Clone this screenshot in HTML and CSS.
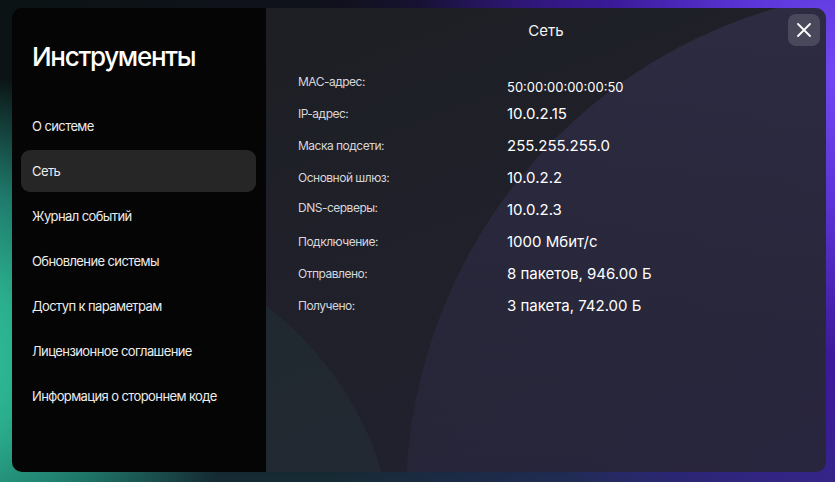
FILE: index.html
```html
<!DOCTYPE html>
<html lang="ru">
<head>
<meta charset="utf-8">
<title>Инструменты</title>
<link rel="stylesheet" href="styles.css">
</head>
<body>
<div class="screen">
  <div class="dialog">
    <aside class="sidebar">
      <h1 class="title">Инструменты</h1>
      <nav class="nav">
        <a class="nav-item">О системе</a>
        <a class="nav-item active">Сеть</a>
        <a class="nav-item">Журнал событий</a>
        <a class="nav-item">Обновление системы</a>
        <a class="nav-item">Доступ к параметрам</a>
        <a class="nav-item">Лицензионное соглашение</a>
        <a class="nav-item">Информация о стороннем коде</a>
      </nav>
    </aside>
    <main class="content">
      <div class="deco deco-circle"></div>
      <div class="deco deco-teal"></div>
      <header class="content-head">
        <span></span>
        <h2 class="content-title">Сеть</h2>
        <button class="close" aria-label="Закрыть">
          <svg width="14" height="14" viewBox="0 0 14 14"><path d="M1 1 L13 13 M13 1 L1 13" stroke="#fff" stroke-width="1.8" stroke-linecap="round" fill="none"/></svg>
        </button>
      </header>
      <dl class="info">
        <dt>MAC-адрес:</dt><dd class="mac">50:00:00:00:00:50</dd>
        <dt>IP-адрес:</dt><dd>10.0.2.15</dd>
        <dt>Маска подсети:</dt><dd>255.255.255.0</dd>
        <dt>Основной шлюз:</dt><dd>10.0.2.2</dd>
        <dt class="dns">DNS-серверы:</dt><dd>10.0.2.3</dd>
        <dt>Подключение:</dt><dd>1000 Мбит/с</dd>
        <dt>Отправлено:</dt><dd>8 пакетов, 946.00 Б</dd>
        <dt>Получено:</dt><dd>3 пакета, 742.00 Б</dd>
      </dl>
    </main>
  </div>
</div>
</body>
</html>
```
FILE: styles.css
```css
* { box-sizing: border-box; }
html, body { margin: 0; padding: 0; }
body {
  width: 835px;
  height: 482px;
  overflow: hidden;
  font-family: Inter, "Noto Sans", sans-serif;
  color: #fff;
  background:
    radial-gradient(ellipse 300px 290px at -60px 360px, #31c69c 0%, #2aae8c 30%, #1f7a6c 60%, rgba(25,80,80,0) 100%),
    radial-gradient(ellipse 420px 520px at 100% 15%, #7048f2 0%, #5a34d6 25%, #3a1a98 55%, rgba(40,20,100,0) 100%),
    linear-gradient(180deg, rgba(0,0,0,0) 80%, rgba(30,70,80,0.5) 100%),
    linear-gradient(90deg, #0b1314 0%, #10111c 40%, #2a1470 80%, #3c1c9a 100%);
}
.screen {
  height: 482px;
  padding: 8px 9px 10px 12px;
  display: flex;
}
.dialog {
  flex: 1;
  display: flex;
  border-radius: 10px;
  overflow: hidden;
}
.sidebar {
  width: 254px;
  flex: none;
  background: #050505;
  padding: 33px 10px 0 9px;
}
.title {
  margin: 0 0 32px 11px;
  font-size: 26px;
  line-height: 32px;
  font-weight: 500;
  color: #fff;
  letter-spacing: -1.3px;
}
.nav {
  display: flex;
  flex-direction: column;
  gap: 3px;
}
.nav-item {
  height: 42px;
  display: flex;
  align-items: center;
  padding-left: 11px;
  font-size: 13px;
  letter-spacing: -0.6px;
  color: #ececec;
  border-radius: 9px;
}
.nav-item.active { background: #262626; }
.content {
  flex: 1;
  position: relative;
  overflow: hidden;
  padding: 6px 6px 0 32px;
  background: linear-gradient(160deg, #1d1f24 0%, #1f2029 40%, #21212d 70%, #232135 100%);
}
.deco {
  position: absolute;
  border-radius: 50%;
  pointer-events: none;
}
.deco-circle {
  left: 140px;
  top: -20px;
  width: 1024px;
  height: 1024px;
  background: linear-gradient(180deg, rgba(130,110,220,0.15) 0%, rgba(120,100,210,0.09) 30%, rgba(110,90,200,0.04) 60%, rgba(110,90,200,0.01) 100%);
}
.deco-teal {
  left: -530px;
  top: 230px;
  width: 660px;
  height: 660px;
  background: rgba(60,150,130,0.07);
}
.content-head {
  position: relative;
  display: grid;
  grid-template-columns: 1fr auto 1fr;
  align-items: center;
  height: 32px;
  margin-left: -26px;
}
.content-title {
  margin: 0;
  font-size: 15px;
  font-weight: 400;
  color: #f4f4f4;
}
.close {
  justify-self: end;
  width: 32px;
  height: 32px;
  border: 0;
  border-radius: 8px;
  background: rgba(255,255,255,0.14);
  display: flex;
  align-items: center;
  justify-content: center;
  padding: 0;
}
.info {
  position: relative;
  margin: 19px 0 0;
  display: grid;
  grid-template-columns: 209px 1fr;
  grid-auto-rows: 32px;
  align-items: center;
}
.info dt {
  font-size: 12px;
  letter-spacing: -0.5px;
  color: #d6d6da;
}
.info dt.dns { padding-bottom: 4px; }
.info dd {
  margin: 0;
  font-size: 15px;
  color: #fff;
}
.info dd.mac {
  font-size: 13px;
  padding-top: 11px;
}
```
